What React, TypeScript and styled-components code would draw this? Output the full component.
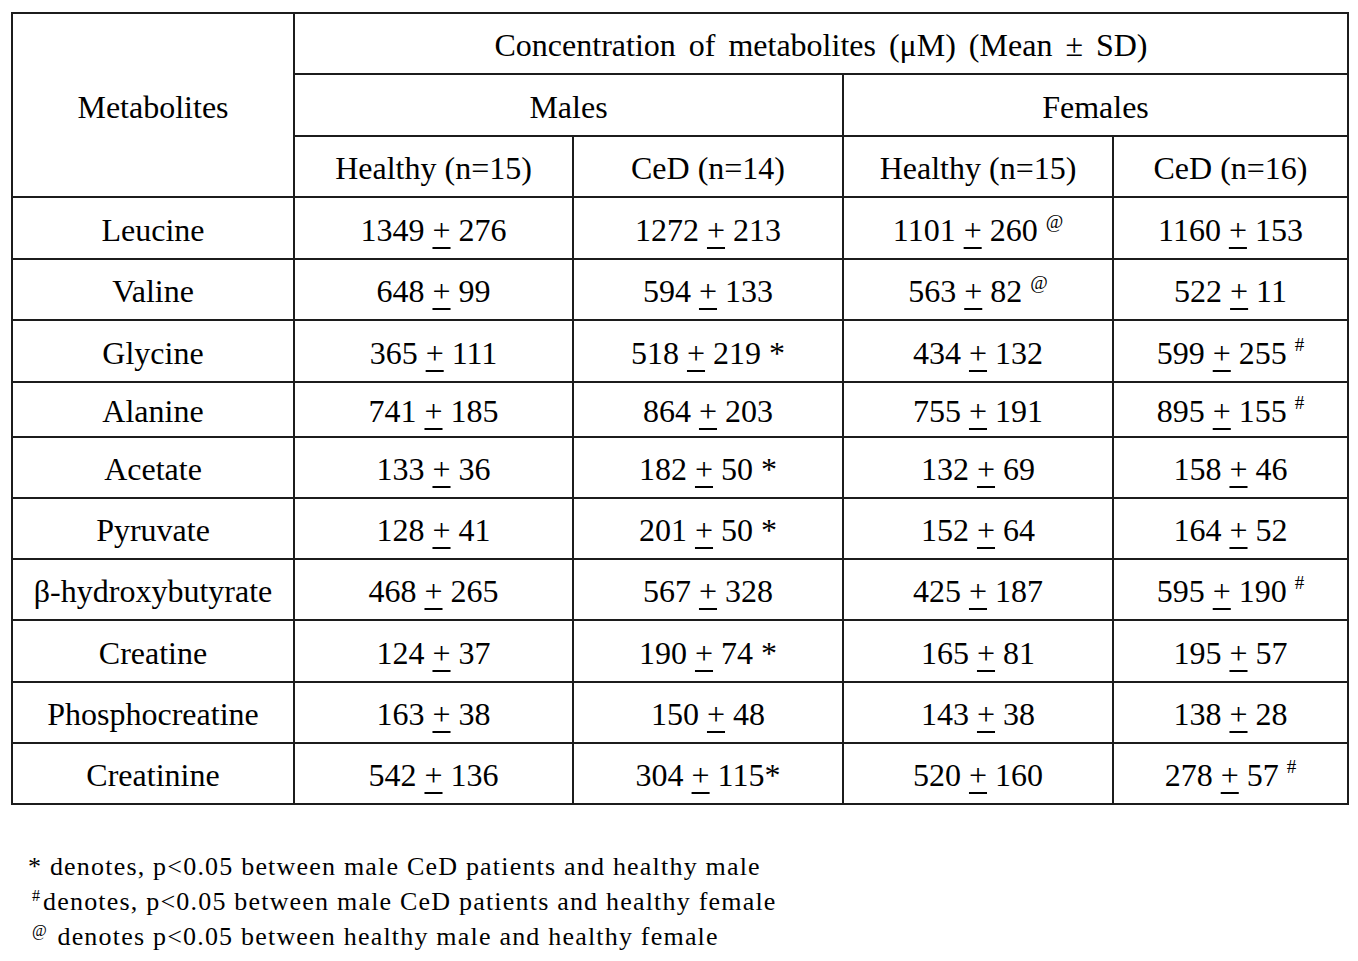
import React from "react";
import styled, { createGlobalStyle } from "styled-components";

const Global = createGlobalStyle`
  html, body { margin: 0; padding: 0; background: #fff; }
  body { font-family: "Liberation Serif", "Times New Roman", serif; color: #000; }
`;

const Page = styled.div`
  width: 1358px;
  height: 961px;
  padding: 12px 0 0 11px;
  box-sizing: border-box;
  background: #fff;
`;

const Grid = styled.div`
  display: grid;
  width: max-content;
  grid-template-columns: 280px 277px 268px 268px 233px;
  grid-template-rows: 59px 60px 59px 60px 59px 60px 53px 59px 59px 59px 60px 59px 59px;
  gap: 2px;
  padding: 2px;
  background: #1c1c1c;
`;

const Cell = styled.div<{ $col?: string; $row?: string }>`
  background: #fff;
  display: flex;
  align-items: center;
  justify-content: center;
  font-size: 32px;
  line-height: 1;
  padding-top: 3px;
  box-sizing: border-box;
  white-space: nowrap;
  ${(p) => (p.$col ? `grid-column: ${p.$col};` : "")}
  ${(p) => (p.$row ? `grid-row: ${p.$row};` : "")}
`;

const Text = styled.span`
  display: inline-block;
`;

const Title = styled.span`
  display: inline-block;
  word-spacing: 5px;
`;

const Pm = styled.span`
  text-decoration: underline;
  text-decoration-thickness: 2px;
  text-underline-offset: 6px;
`;

const Sup = styled.sup`
  font-size: 19px;
  vertical-align: 13px;
  line-height: 0;
`;

const Notes = styled.div`
  margin-top: 44px;
  padding-left: 17px;
  font-size: 26px;
  letter-spacing: 1.2px;
  line-height: 35px;
`;

const NoteLine = styled.div<{ $indent?: number }>`
  padding-left: ${(p) => p.$indent ?? 0}px;
  white-space: nowrap;
`;

const NoteSup = styled.sup`
  font-size: 16px;
  vertical-align: 9px;
  line-height: 0;
  letter-spacing: 0;
  margin-right: 3px;
`;

type Val = [string, string, string?];

const rows: { name: string; vals: Val[] }[] = [
  { name: "Leucine", vals: [["1349", "276"], ["1272", "213"], ["1101", "260", "@"], ["1160", "153"]] },
  { name: "Valine", vals: [["648", "99"], ["594", "133"], ["563", "82", "@"], ["522", "11"]] },
  { name: "Glycine", vals: [["365", "111"], ["518", "219", "*"], ["434", "132"], ["599", "255", "#"]] },
  { name: "Alanine", vals: [["741", "185"], ["864", "203"], ["755", "191"], ["895", "155", "#"]] },
  { name: "Acetate", vals: [["133", "36"], ["182", "50", "*"], ["132", "69"], ["158", "46"]] },
  { name: "Pyruvate", vals: [["128", "41"], ["201", "50", "*"], ["152", "64"], ["164", "52"]] },
  { name: "β-hydroxybutyrate", vals: [["468", "265"], ["567", "328"], ["425", "187"], ["595", "190", "#"]] },
  { name: "Creatine", vals: [["124", "37"], ["190", "74", "*"], ["165", "81"], ["195", "57"]] },
  { name: "Phosphocreatine", vals: [["163", "38"], ["150", "48"], ["143", "38"], ["138", "28"]] },
  { name: "Creatinine", vals: [["542", "136"], ["304", "115", "*!"], ["520", "160"], ["278", "57", "#"]] },
];

function Value({ v }: { v: Val }) {
  const [a, b, m] = v;
  return (
    <Text>
      {a + " "}
      <Pm>+</Pm>
      {" " + b}
      {m === "*" && " *"}
      {m === "*!" && "*"}
      {(m === "@" || m === "#") && (
        <>
          {" "}
          <Sup>{m}</Sup>
        </>
      )}
    </Text>
  );
}

export default function App() {
  return (
    <Page>
      <Global />
      <Grid>
        <Cell $col="1" $row="1 / span 3">Metabolites</Cell>
        <Cell $col="2 / span 4">
          <Title>Concentration of metabolites (μM) (Mean ± SD)</Title>
        </Cell>
        <Cell $col="2 / span 2">Males</Cell>
        <Cell $col="4 / span 2">Females</Cell>
        <Cell>Healthy (n=15)</Cell>
        <Cell>CeD (n=14)</Cell>
        <Cell>Healthy (n=15)</Cell>
        <Cell>CeD (n=16)</Cell>
        {rows.map((r, i) => (
          <React.Fragment key={i}>
            <Cell>{r.name}</Cell>
            {r.vals.map((v, j) => (
              <Cell key={j}>
                <Value v={v} />
              </Cell>
            ))}
          </React.Fragment>
        ))}
      </Grid>
      <Notes>
        <NoteLine>* denotes, p&lt;0.05 between male CeD patients and healthy male</NoteLine>
        <NoteLine $indent={4}>
          <NoteSup>#</NoteSup>denotes, p&lt;0.05 between male CeD patients and healthy female
        </NoteLine>
        <NoteLine $indent={4}>
          <NoteSup>@</NoteSup> denotes p&lt;0.05 between healthy male and healthy female
        </NoteLine>
      </Notes>
    </Page>
  );
}
